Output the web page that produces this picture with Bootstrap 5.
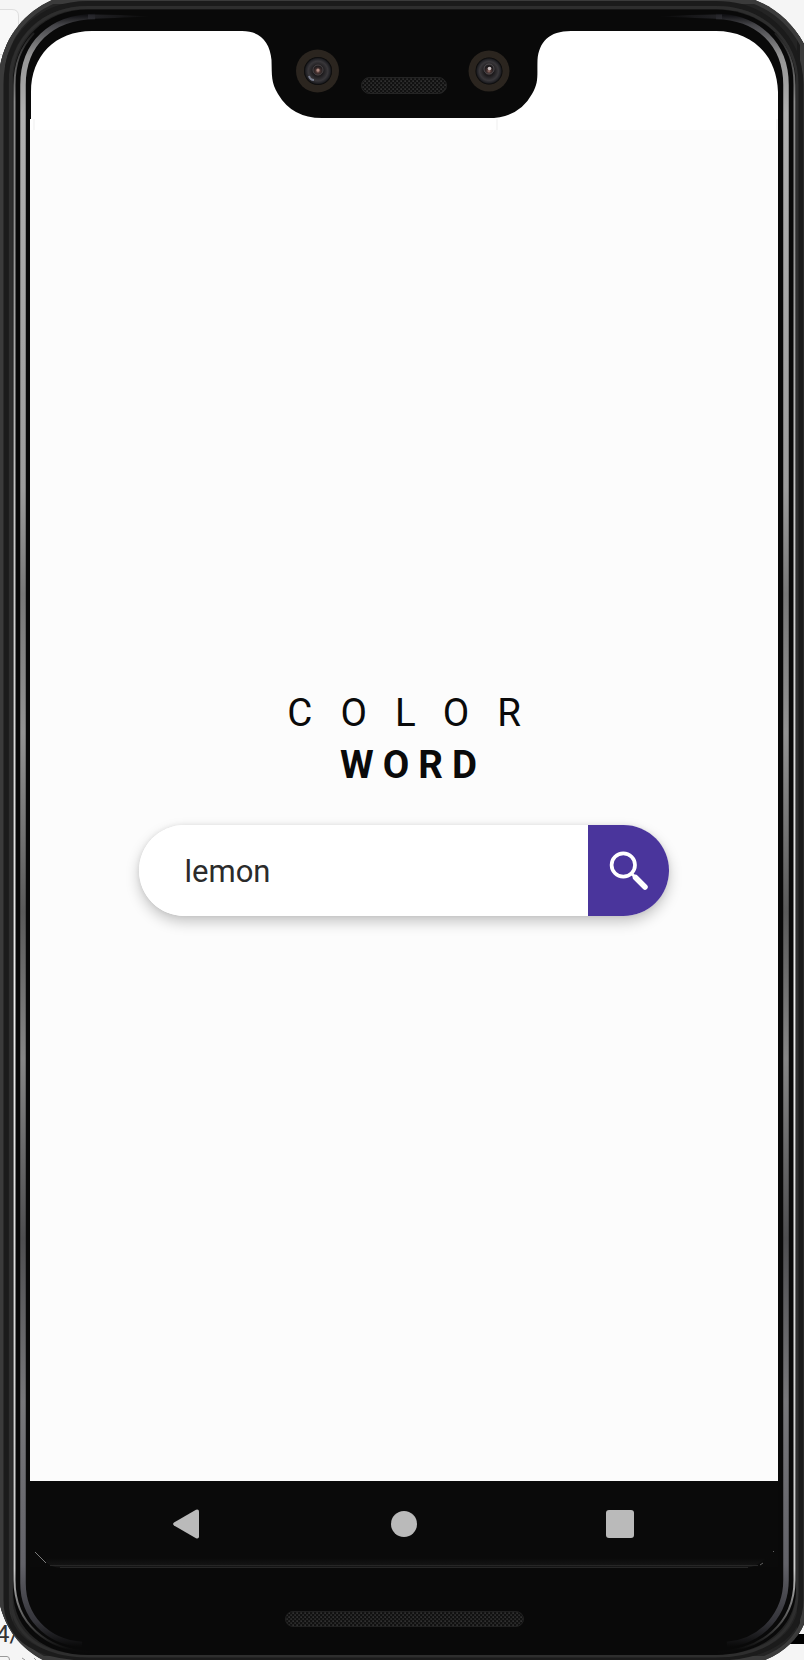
<!DOCTYPE html>
<html lang="en">
<head>
<meta charset="utf-8">
<meta name="viewport" content="width=device-width, initial-scale=1">
<title>Color Word</title>
<link href="https://cdn.jsdelivr.net/npm/bootstrap@5.3.0/dist/css/bootstrap.min.css" rel="stylesheet">
<style>
body { font-family: Roboto, "Noto Sans", sans-serif; background: #f5f5f5; overflow: hidden; }
.phone { width: 804px; height: 1660px; }
.phone-frame { z-index: 0; }
.phone-screen { z-index: 1; height: 1660px; padding: 119px 26px 0 30px; }
.app-view { height: 1362px; padding-top: 567.5px; }
.brand-top, .brand-bottom { font-size: 38.5px; line-height: 52px; color: #0a0a0a; margin: 0; }
.brand-top { font-weight: 400; letter-spacing: 28.1px; padding-left: 28.5px; }
.brand-bottom { font-weight: 700; letter-spacing: 9px; padding-left: 18px; }
.search-pill { width: 530px; height: 91px; margin-top: 34.5px; border-radius: 46px; box-shadow: 0 6px 14px rgba(0,0,0,.22), 0 0 5px rgba(0,0,0,.08); }
.search-pill .form-control { font-size: 31px; color: #2b2b2b; padding: 3px 0 0 45.5px; background: #fff; box-shadow: none; }
.search-btn { width: 81px; background: #4a359c; border-radius: 0; padding: 0; }
.nav-keys { height: 86px; padding: 0 144.5px 0 143px; }
</style>
</head>
<body>
<div class="phone position-relative">
  <svg class="phone-frame position-absolute top-0 start-0" width="804" height="1660" viewBox="0 0 804 1660" aria-hidden="true">
    <defs>
      <linearGradient id="metalL"><stop offset="0" stop-color="#404040"/><stop offset=".25" stop-color="#303030"/><stop offset=".4" stop-color="#191919"/><stop offset=".65" stop-color="#202020"/><stop offset=".75" stop-color="#303030"/><stop offset="1" stop-color="#292929"/></linearGradient>
      <linearGradient id="gloss" gradientUnits="userSpaceOnUse" x1="0" y1="15" x2="0" y2="1646">
        <stop offset="0" stop-color="#101013"/><stop offset=".006" stop-color="#444448"/><stop offset=".025" stop-color="#959595"/><stop offset=".06" stop-color="#b0b0b0"/><stop offset=".29" stop-color="#9c9c9c"/><stop offset=".355" stop-color="#787878"/><stop offset=".44" stop-color="#929292"/><stop offset=".55" stop-color="#5a5a5a"/><stop offset=".64" stop-color="#858585"/><stop offset=".75" stop-color="#4e4e50"/><stop offset=".85" stop-color="#77777a"/><stop offset=".95" stop-color="#626268"/><stop offset=".985" stop-color="#34343a"/><stop offset="1" stop-color="#0a0a0a"/>
      </linearGradient>
      <linearGradient id="rim" gradientUnits="userSpaceOnUse" x1="0" y1="20" x2="0" y2="1650">
        <stop offset="0" stop-color="#0a0a0a"/><stop offset=".05" stop-color="#8a8a8a"/><stop offset=".1" stop-color="#8a8a8a"/><stop offset=".3" stop-color="#c8c8c8"/><stop offset=".6" stop-color="#eee"/><stop offset=".95" stop-color="#ccc"/><stop offset="1" stop-color="#0a0a0a"/>
      </linearGradient>
      <linearGradient id="fadeL"><stop offset="0" stop-color="#34343a"/><stop offset="1" stop-color="#0a0a0a"/></linearGradient>
      <linearGradient id="fadeR"><stop offset="0" stop-color="#0a0a0a"/><stop offset="1" stop-color="#34343a"/></linearGradient>
      <radialGradient id="lens"><stop offset="0" stop-color="#9a7770"/><stop offset=".15" stop-color="#4a3432"/><stop offset=".35" stop-color="#1b191b"/><stop offset=".7" stop-color="#39373a"/><stop offset=".88" stop-color="#202024"/><stop offset="1" stop-color="#050505"/></radialGradient>
      <linearGradient id="lip" x1="0" y1="0" x2="0" y2="1"><stop offset="0" stop-color="#0a0a0a"/><stop offset="1" stop-color="#171717"/></linearGradient>
      <pattern id="mesh" width="4" height="4" patternUnits="userSpaceOnUse"><rect width="4" height="4" fill="#111"/><rect width="1.2" height="1.2" x=".5" y=".5" fill="#505050"/><rect width="1.2" height="1.2" x="2.5" y="2.5" fill="#464646"/></pattern>
      <clipPath id="body"><path d="M52 0C25 12 6 35 0 66V1605C6 1629 20 1648 43 1660H765C785 1652 798 1638 804 1624V44C792 22 775 8 755 0Z"/></clipPath>
    </defs>

    <!-- desktop behind the phone -->
    <rect width="804" height="1660" fill="#f5f5f5"/>
    <path d="M-5 9.5H12Q18.5 9.5 18.5 16V54.5H-5" fill="#f8f8f8" stroke="#dedede"/>
    <text x="-4" y="1642" font-size="24" fill="#333" font-family="Roboto">4/</text>
    <path d="M0 1656.500H7Q9.500 1656.500 9.500 1660M22 1658l3 2M34 1658l2 2" fill="none" stroke="#999"/>
    <rect x="784" y="1634" width="20" height="10"/>

    <g clip-path="url(#body)">
      <rect width="804" height="1660" fill="#242424"/>
      <rect width="13" height="1660" fill="url(#metalL)"/>
      <rect x="797" width="7" height="1660" fill="#1b1b1b"/>
      <path d="M52 0C25 12 6 35 1 66V1605C6 1629 20 1648 43 1660H765C785 1652 798 1638 804 1624V44C792 22 775 8 755 0Z" fill="none" stroke="#3b3b3b" stroke-width="8"/>
      <path d="M6 1600V84C6 34 42 3.500 88 3.500H716C764 3.500 800 36 801 84V1600C801 1638 765 1658 716 1658H88C42 1658 6 1642 6 1600Z" fill="none" stroke="#1b1b1b" stroke-width="5"/>
      <path d="M10.500 1594V84C10.500 36 45 7.500 88 7.500H716C761 7.500 797 39 797 84V1594C797 1632 765 1656 716 1656H88C45 1656 10.500 1637 10.500 1594Z" fill="none" stroke="#2e2e2e" stroke-width="3"/>
      <path d="M13 1590V84C13 39 46 9.500 88 9.500H716C760 9.500 796 40 796 84V1590C796 1628 762 1655 716 1655H88C46 1655 13 1632 13 1590Z" fill="#090909"/>
    </g>
    <g fill="none">
      <path d="M90 1652C47 1650 14.500 1624 14.500 1580V85C14.500 64 20 48 34 33M718 1652C761 1650 794.500 1624 794.500 1580V85C794.500 64 789 48 775 33" stroke="url(#rim)" stroke-width="2"/>
      <path d="M95 16.500C51 17 23 44 23 85V1583C23 1616 46 1642 82 1644.500M716 16.500C758 17 786 44 786 85V1580C786 1612 764 1641 727 1644.500" stroke="url(#gloss)" stroke-width="5.500"/>
    </g>
    <path d="M88 14.500Q110 14 152 16.500Q110 18 88 19Z" fill="url(#fadeL)" opacity=".6"/>
    <path d="M722 14.500Q700 14 658 16.500Q700 18 722 19Z" fill="url(#fadeR)" opacity=".6"/>

    <!-- display -->
    <path d="M31 119V92C31 56 55 31 92 31H242C260 31 270 42 271.500 60C272 76 271 82 278 94Q292 118 322 118H488Q519 118 532 94C539 82 537 76 537.500 60C539 42 549 31 571 31H716C752 31 777 55 778 92V130H30V119Z" fill="#fff"/>
    <rect x="30" y="130" width="748" height="1351" fill="#fcfcfc"/>
    <path d="M34 119v11M497 119v11M777 119v11" stroke="#f7f7f7" stroke-width="2"/>

    <!-- cameras and earpiece -->
    <circle cx="317.500" cy="71" r="21.500" fill="#2b251f"/><circle cx="318" cy="71" r="14" fill="url(#lens)"/>
    <circle cx="318" cy="70" r="5" fill="none" stroke="#4a4446"/><circle cx="318" cy="70" r="1.600" fill="#b38d83"/><path d="M309 76q1 4 5 4" stroke="#777b8b" stroke-width="2" fill="none"/>
    <circle cx="489" cy="71" r="20.500" fill="#2b251f"/><circle cx="489" cy="71" r="13.500" fill="url(#lens)"/>
    <circle cx="489" cy="69" r="5" fill="none" stroke="#4f4b4e"/><circle cx="489.500" cy="68.500" r="1.800" fill="#c9c0c0"/>
    <rect x="361.500" y="77.500" width="85" height="16" rx="8" fill="url(#mesh)" stroke="#242424"/>

    <!-- chin -->
    <rect x="30" y="1481" width="748" height="86" fill="#0a0a0a"/>
    <path d="M46 1558H766Q756 1567.500 746 1567.500H60Q52 1567.500 46 1562Z" fill="url(#lip)"/>
    <path d="M50 1565.500H758M60 1567.500H748" stroke="#262626"/>
    <path d="M35 1552l11 11" stroke="#999" stroke-width=".8"/><path d="M774 1551l-1 1M763 1563l-3 2" stroke="#777" stroke-width=".8"/>
    <rect x="285.500" y="1611.500" width="238" height="15" rx="7.500" fill="url(#mesh)" stroke="#202020"/>
  </svg>

  <div class="phone-screen position-relative d-flex flex-column">
    <main class="app-view d-flex flex-column align-items-center">
      <h1 class="brand-top">COLOR</h1>
      <h2 class="brand-bottom">WORD</h2>
      <form class="search-pill d-flex overflow-hidden bg-white">
        <input class="form-control border-0 rounded-0 flex-fill" type="text" value="lemon" aria-label="Color word">
        <button class="btn search-btn border-0 flex-shrink-0" type="button" aria-label="Search">
          <svg class="d-block" width="81" height="91" viewBox="0 0 81 91" fill="none" stroke="#fff" stroke-linecap="round"><circle cx="35.300" cy="40" r="11.700" stroke-width="3.700"/><path d="M43.500 48.500l4 4" stroke-width="3"/><path d="M47.500 52.500L57 62" stroke-width="5.500"/></svg>
        </button>
      </form>
    </main>
    <nav class="nav-keys d-flex align-items-center justify-content-between" aria-label="System navigation">
      <svg width="26" height="30" viewBox="0 0 26 30" fill="#bababa"><path d="M1 13.500L23 .8Q26 0 26 2.500V27.500Q26 30 23 29.200L1 16.500Q-.8 15 1 13.500Z"/></svg>
      <svg class="ms-1" width="26" height="26" viewBox="0 0 26 26" fill="#bababa"><circle cx="13" cy="13" r="13"/></svg>
      <svg width="28" height="28" viewBox="0 0 28 28" fill="#bababa"><rect width="28" height="28" rx="3"/></svg>
    </nav>
  </div>
</div>
<script src="https://cdn.jsdelivr.net/npm/bootstrap@5.3.0/dist/js/bootstrap.bundle.min.js"></script>
</body>
</html>
